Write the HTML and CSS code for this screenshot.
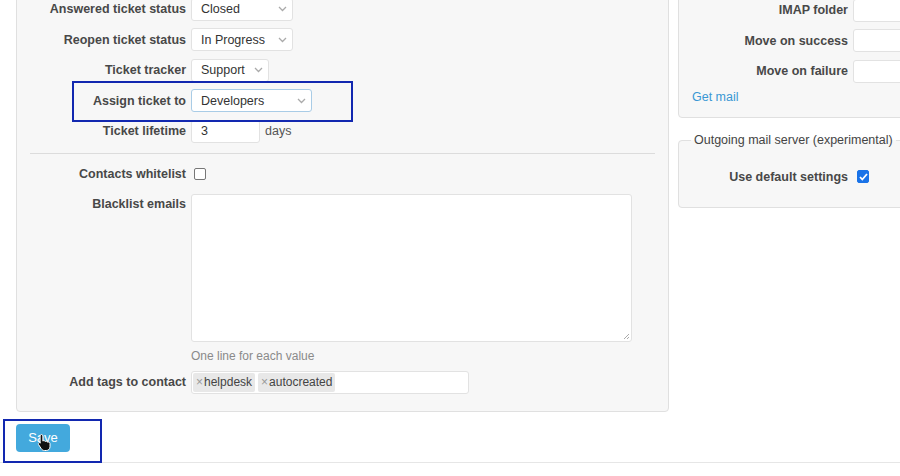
FILE: index.html
```html
<!DOCTYPE html>
<html lang="en">
<head>
    <meta charset="UTF-8">
    <title>Helpdesk settings</title>
    <link rel="stylesheet" href="styles.css">
</head>
<body>
    <div class="page">
        <div class="split">
            <div class="split-left">
                <div class="box">
                    <div class="row">
                        <label>Answered ticket status</label>
                        <div class="select w102"><span>Closed</span>
                            <svg width="9" height="6" viewBox="0 0 9 6"><path d="M1 1l3.5 3.5L8 1" fill="none" stroke="#aaa" stroke-width="1.3"/></svg>
                        </div>
                    </div>
                    <div class="row">
                        <label>Reopen ticket status</label>
                        <div class="select w102"><span>In Progress</span>
                            <svg width="9" height="6" viewBox="0 0 9 6"><path d="M1 1l3.5 3.5L8 1" fill="none" stroke="#aaa" stroke-width="1.3"/></svg>
                        </div>
                    </div>
                    <div class="row">
                        <label>Ticket tracker</label>
                        <div class="select w78"><span>Support</span>
                            <svg width="9" height="6" viewBox="0 0 9 6"><path d="M1 1l3.5 3.5L8 1" fill="none" stroke="#aaa" stroke-width="1.3"/></svg>
                        </div>
                    </div>
                    <div class="row">
                        <label>Assign ticket to</label>
                        <div class="select w120 focused"><span>Developers</span>
                            <svg width="9" height="6" viewBox="0 0 9 6"><path d="M1 1l3.5 3.5L8 1" fill="none" stroke="#aaa" stroke-width="1.3"/></svg>
                        </div>
                    </div>
                    <div class="row">
                        <label>Ticket lifetime</label>
                        <div class="input w69">3</div>
                        <span class="unit">days</span>
                    </div>

                    <hr class="sep">

                    <div class="row">
                        <label>Contacts whitelist</label>
                        <span class="checkbox"></span>
                    </div>
                    <div class="row row-top">
                        <label>Blacklist emails</label>
                        <div class="textarea">
                            <svg class="grip" width="7" height="7" viewBox="0 0 7 7"><path d="M6 1L1 6M6 4L4 6" stroke="#aaa" stroke-width="1"/></svg>
                        </div>
                    </div>
                    <p class="hint">One line for each value</p>
                    <div class="row row-tags">
                        <label>Add tags to contact</label>
                        <div class="tags">
                            <span class="tag"><b>×</b>helpdesk</span>
                            <span class="tag"><b>×</b>autocreated</span>
                        </div>
                    </div>
                </div>
            </div>

            <div class="split-right">
                <div class="box box-right">
                    <div class="row">
                        <label>IMAP folder</label>
                        <div class="input wide"></div>
                    </div>
                    <div class="row">
                        <label>Move on success</label>
                        <div class="input wide"></div>
                    </div>
                    <div class="row">
                        <label>Move on failure</label>
                        <div class="input wide"></div>
                    </div>
                    <a href="#" class="getmail">Get mail</a>
                </div>

                <fieldset class="box fieldset">
                    <legend>Outgoing mail server (experimental)</legend>
                    <div class="row">
                        <label>Use default settings</label>
                        <span class="checkbox checked">
                            <svg width="9" height="8" viewBox="0 0 9 8"><path d="M1 4l2.3 2.5L8 1" fill="none" stroke="#fff" stroke-width="1.8"/></svg>
                        </span>
                    </div>
                </fieldset>
            </div>
        </div>

        <div class="actions">
            <button class="btn">Save</button>
        </div>
    </div>

    <!-- highlight frames -->
    <div class="frame frame-assign"></div>
    <div class="frame frame-save"></div>

    <svg class="pointer" width="16" height="19" viewBox="0 0 16 19">
        <path d="M4.5 1.5c.8 0 1.4.6 1.4 1.4v5.2c.3-.4.8-.6 1.3-.5.6.1 1 .5 1.1 1 .3-.3.8-.5 1.3-.4.6.1 1 .6 1.1 1.1.3-.2.7-.3 1.1-.2.7.2 1.2.8 1.2 1.5v3.2c0 2.2-1.6 3.7-3.7 3.7H7.4c-1.3 0-2.3-.6-3-1.6L1.6 11.6c-.4-.6-.3-1.4.3-1.8.6-.4 1.4-.3 1.8.2l-.6-.6V2.9c0-.8.6-1.4 1.4-1.4z" fill="#111" stroke="#fff" stroke-width="1"/>
    </svg>
</body>
</html>
```

FILE: styles.css
```css
html, body {
    margin: 0;
    height: 100%;
    overflow: hidden;
}

body {
    font-family: 'Liberation Sans', Arial, sans-serif;
    font-size: 12.5px;
    color: #333;
    background: #fff;
    position: relative;
}

.page {
    width: 1100px;
    padding-left: 16px;
}

.split {
    display: flex;
    gap: 9px;
    align-items: flex-start;
}

.split-left {
    width: 653px;
}

.split-right {
    width: 300px;
}

.box {
    background: #f7f7f7;
    border: 1px solid #e0e0e0;
    border-radius: 4px;
    box-sizing: border-box;
}

.split-left .box {
    margin-top: -15px;
    padding: 7.75px 0 17px;
}

.box-right {
    margin-top: -14px;
    padding: 7.75px 0 12px;
}

.row {
    display: flex;
    align-items: center;
    gap: 5px;
    height: 30.5px;
}

.row label {
    width: 169px;
    flex: none;
    text-align: right;
    font-weight: bold;
    color: #484848;
}

.row-top {
    align-items: flex-start;
    height: auto;
    padding-top: 5px;
}

.row-top label {
    line-height: 20px;
}

.row-tags {
    height: 23px;
    margin-top: 7px;
}

.select,
.input {
    height: 23px;
    box-sizing: border-box;
    background: #fff;
    border: 1px solid #e2e2e2;
    border-radius: 3px;
    display: flex;
    align-items: center;
    justify-content: space-between;
    padding: 0 5px 0 9px;
    color: #333;
}

.select svg {
    flex: none;
}

.select.focused {
    border-color: #a9cce6;
}

.w102 { width: 102px; }
.w78 { width: 78px; }
.w120 { width: 121px; }
.w69 { width: 69px; }
.wide { width: 100px; flex: none; }

.unit {
    color: #555;
}

.sep {
    border: 0;
    border-top: 1px solid #dcdcdc;
    margin: 7px 13px 4px;
}

.checkbox {
    width: 12px;
    height: 12px;
    box-sizing: border-box;
    border: 1px solid #777;
    border-radius: 2px;
    background: #fff;
    margin-left: 3px;
    display: flex;
    align-items: center;
    justify-content: center;
}

.checkbox.checked {
    background: #1a73e8;
    border-color: #1a73e8;
    width: 12px;
    height: 13px;
    margin-left: 4px;
}

.textarea {
    width: 441px;
    height: 148px;
    box-sizing: border-box;
    background: #fff;
    border: 1px solid #e2e2e2;
    border-radius: 3px;
    position: relative;
}

.grip {
    position: absolute;
    right: 1px;
    bottom: 1px;
}

.hint {
    margin: 6px 0 0 174px;
    line-height: 16px;
    font-size: 12px;
    color: #8a8a8a;
}

.tags {
    width: 278px;
    height: 23px;
    box-sizing: border-box;
    background: #fff;
    border: 1px solid #e2e2e2;
    border-radius: 3px;
    display: flex;
    align-items: center;
    gap: 3px;
    padding: 0 1px;
}

.tag {
    background: #e8e8e8;
    border-radius: 2px;
    height: 19px;
    line-height: 19px;
    padding: 0 3px;
    font-size: 12px;
    color: #444;
}

.tag b {
    font-weight: normal;
    color: #999;
    margin-right: 1px;
}

.getmail {
    display: block;
    margin: 3px 0 0 13px;
    line-height: 16px;
    color: #3a97d4;
    text-decoration: none;
}

.fieldset {
    margin: 14px 0 0;
    padding: 13px 0 15px;
    min-width: 0;
}

.fieldset legend {
    margin-left: 12px;
    padding: 0 3px;
    line-height: 16px;
    color: #444;
}

.actions {
    padding-top: 12px;
    height: 38px;
    border-bottom: 1px solid #e6e6e6;
    margin-left: -16px;
    padding-left: 16px;
}

.btn {
    font-family: inherit;
    font-size: 13px;
    width: 54px;
    height: 28px;
    border: none;
    border-radius: 4px;
    background: #43a9dd;
    color: #fff;
    padding: 0;
}

.frame {
    position: absolute;
    border: 2px solid #1228b0;
    box-sizing: border-box;
}

.frame-assign {
    left: 72px;
    top: 81px;
    width: 281px;
    height: 41px;
}

.frame-save {
    left: 3px;
    top: 419px;
    width: 99px;
    height: 44px;
}

.pointer {
    position: absolute;
    left: 37px;
    top: 433px;
}
```
